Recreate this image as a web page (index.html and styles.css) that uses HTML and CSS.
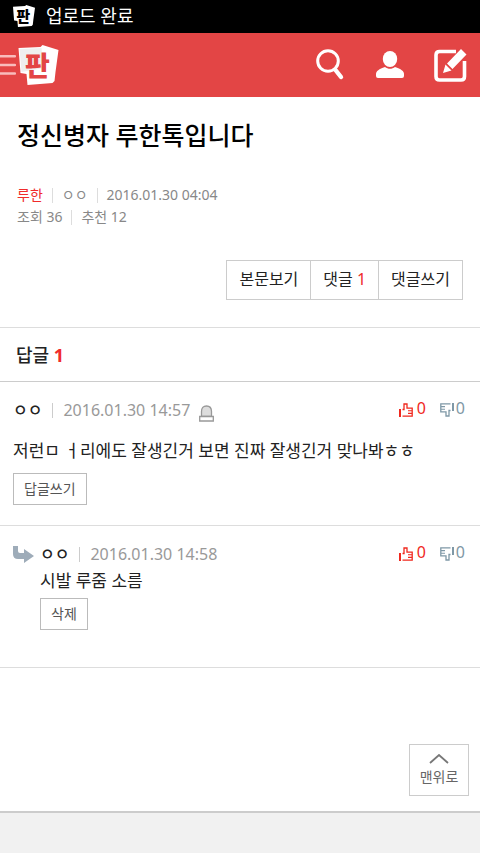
FILE: index.html
```html
<!DOCTYPE html>
<html lang="ko">

<head>
    <meta charset="UTF-8">
    <meta name="viewport" content="width=device-width, initial-scale=1.0">
    <title>정신병자 루한톡입니다</title>
    <link rel="stylesheet" href="styles.css">
</head>

<body>
    <!-- shared icons -->
    <svg class="defs" width="0" height="0" aria-hidden="true">
        <symbol id="thumb-up" viewBox="0 0 14 14">
            <path fill="none" stroke="currentColor" stroke-width="1.3" d="M3.500 6.500H5V1h3v4.200h5.200v8H3.500"/>
            <path fill="none" stroke="currentColor" stroke-width="1.1" d="M9 7.8h4M9 10.4h4"/>
            <path fill="currentColor" d="M0 6h2v8H0z"/>
        </symbol>
        <symbol id="thumb-down" viewBox="0 0 14 14">
            <path fill="none" stroke="currentColor" stroke-width="1.3" d="M10.500 7.500H9V13H6V8.800H.8V.8h9.700"/>
            <path fill="none" stroke="currentColor" stroke-width="1.1" d="M1 3.600h4M1 6.200h4"/>
            <path fill="currentColor" d="M12 0h2v8h-2z"/>
        </symbol>
    </svg>

    <div class="status-bar">
        <svg class="status-logo" viewBox="0 0 40 40" aria-hidden="true">
            <path fill="#fff" d="M0 3l22-1 2-2 16 5-3 22-1 9-2 2-25 2-1-11-6-1z"/>
            <text class="logo-text logo-text-dark" x="19" y="31" text-anchor="middle">판</text>
        </svg>
        <span>업로드 완료</span>
    </div>

    <header class="header">
        <button class="menu-btn" type="button" aria-label="메뉴">
            <svg width="16" height="22" viewBox="0 0 16 22">
                <path stroke="#f9bcbc" stroke-width="2.4" stroke-linecap="round" d="M0 2.2h15M0 11h15M0 19.5h15"/>
            </svg>
        </button>
        <a class="logo" href="#" aria-label="판">
            <svg width="41" height="40" viewBox="0 0 40 40">
                <path fill="#fff" d="M0 3l22-1 2-2 16 5-3 22-1 9-2 2-25 2-1-11-6-1z"/>
                <path fill="#efefef" d="M1 4l22-1 2 20-22 4z"/>
                <text class="logo-text" x="19" y="31" text-anchor="middle">판</text>
            </svg>
        </a>
        <nav class="header-nav">
            <button type="button" aria-label="검색">
                <svg width="30" height="32" viewBox="0 0 30 32">
                    <circle cx="12" cy="12" r="10.3" fill="none" stroke="#fff" stroke-width="3"/>
                    <path stroke="#fff" stroke-width="4.4" stroke-linecap="round" d="M19.5 21l5.500 7"/>
                </svg>
            </button>
            <button type="button" aria-label="내 정보">
                <svg width="28" height="28" viewBox="0 0 28 28">
                    <ellipse cx="14" cy="8" rx="7.2" ry="8" fill="#fff"/>
                    <path fill="#fff" d="M0 25v-2c0-3 3-5 9-7 3 2.400 7 2.400 10 0 6 2 9 4 9 7v2q0 2-2 2H2q-2 0-2-2z"/>
                </svg>
            </button>
            <button type="button" aria-label="글쓰기">
                <svg width="33" height="33" viewBox="0 0 33 33">
                    <path fill="none" stroke="#fff" stroke-width="3.600" d="M22 2.500H5.500q-3.500 0-3.500 3.500v21.500q0 3.500 3.500 3.500h21.500q3.500 0 3.500-3.500V12"/>
                    <path fill="#fff" d="M27 0l5.500 5.500L18.500 20 13 14.500zM11.500 15.500l6 6-8.500 2.500z"/>
                </svg>
            </button>
        </nav>
    </header>

    <main>
        <section class="post">
            <h1>정신병자 루한톡입니다</h1>
            <div class="post-info">
                <a class="channel" href="#">루한</a><i class="bar"></i><span>ㅇㅇ</span><i class="bar"></i><span>2016.01.30 04:04</span>
            </div>
            <div class="post-info">
                <span>조회 36</span><i class="bar"></i><span>추천 12</span>
            </div>
            <div class="post-btns">
                <button type="button">본문보기</button>
                <button type="button">댓글 <em>1</em></button>
                <button type="button">댓글쓰기</button>
            </div>
        </section>

        <h2 class="reply-title">답글 <em>1</em></h2>

        <article class="comment">
            <div class="comment-head">
                <b class="name">ㅇㅇ</b><i class="bar"></i><span class="date">2016.01.30 14:57</span>
                <button class="report" type="button" aria-label="신고">
                    <svg width="15" height="17" viewBox="0 0 15 17">
                        <path fill="#ddd" stroke="#999" stroke-width="1.3" d="M2.500 11.500V6.500q0-5.500 5-5.500t5 5.500v5z"/>
                        <path fill="#fff" stroke="#999" stroke-width="1.300" d="M.7 11.500h13.600v4.500H.7z"/>
                    </svg>
                </button>
                <div class="votes">
                    <button class="up" type="button" aria-label="추천"><svg width="14" height="14"><use href="#thumb-up"/></svg>0</button>
                    <button class="down" type="button" aria-label="반대"><svg width="14" height="14"><use href="#thumb-down"/></svg>0</button>
                </div>
            </div>
            <p class="comment-text">저런ㅁ ㅓ리에도 잘생긴거 보면 진짜 잘생긴거 맞나봐ㅎㅎ</p>
            <button class="small-btn" type="button">답글쓰기</button>
        </article>

        <article class="comment reply">
            <div class="comment-head">
                <svg class="arrow" width="21" height="17" viewBox="0 0 21 17" aria-hidden="true">
                    <path fill="#9eacb9" d="M0 0h5v5q0 2 2 2h4V3l10 7-10 7v-4H5q-5 0-5-5z"/>
                </svg>
                <b class="name">ㅇㅇ</b><i class="bar"></i><span class="date">2016.01.30 14:58</span>
                <div class="votes">
                    <button class="up" type="button" aria-label="추천"><svg width="14" height="14"><use href="#thumb-up"/></svg>0</button>
                    <button class="down" type="button" aria-label="반대"><svg width="14" height="14"><use href="#thumb-down"/></svg>0</button>
                </div>
            </div>
            <p class="comment-text">시발 루줌 소름</p>
            <button class="small-btn" type="button">삭제</button>
        </article>

        <div class="top-wrap">
            <a class="top-btn" href="#">
                <svg width="20" height="10" viewBox="0 0 20 10"><path fill="none" stroke="#777" stroke-width="1.800" d="M1 9l9-8 9 8"/></svg>
                맨위로
            </a>
        </div>
    </main>

    <footer class="footer"></footer>
</body>

</html>
```

FILE: styles.css
```css
* {
    box-sizing: border-box;
}

body {
    display: flex;
    flex-direction: column;
    min-height: 100vh;
    margin: 0;
    font-family: "Noto Sans", "Noto Sans CJK KR", sans-serif;
    font-size: 16px;
    color: #222;
    background-color: #fff;
}

h1, h2, p {
    margin: 0;
}

a {
    color: inherit;
    text-decoration: none;
}

em, i {
    font-style: normal;
}

svg {
    display: block;
}

button {
    padding: 0;
    border: none;
    background: none;
    font-family: inherit;
    color: inherit;
    cursor: pointer;
}

.defs {
    position: absolute;
}

.status-bar {
    display: flex;
    align-items: center;
    gap: 11px;
    height: 33px;
    padding: 0 13px 2px;
    font-size: 18px;
    line-height: 24px;
    color: #fff;
    background-color: #000;
}

.status-logo {
    width: 22px;
    height: 22px;
}

.logo-text {
    font-family: "Noto Sans CJK KR", sans-serif;
    font-size: 27px;
    font-weight: 900;
    fill: #e34545;
}

.logo-text-dark {
    fill: #000;
}

.header {
    display: flex;
    align-items: center;
    height: 64px;
    padding-right: 13px;
    background-color: #e34545;
}

.menu-btn {
    margin-right: 2px;
}

.header-nav {
    display: flex;
    align-items: center;
    gap: 30px;
    margin-left: auto;
}

.post {
    padding: 19px 17px 27px;
    border-bottom: 1px solid #ddd;
}

.post h1 {
    margin-bottom: 30px;
    font-size: 25px;
    font-weight: 500;
    line-height: 38px;
    color: #000;
}

.post-info {
    display: flex;
    align-items: center;
    font-size: 14px;
    line-height: 22px;
    color: #888;
}

.bar {
    width: 1px;
    height: 15px;
    margin: 0 9px;
    background-color: #ddd;
}

.channel {
    color: #f02b2b;
}

.post-btns {
    display: flex;
    justify-content: flex-end;
    margin-top: 32px;
}

.post-btns button {
    height: 40px;
    padding: 0 12px 4px;
    border: 1px solid #ccc;
    font-size: 16px;
}

.post-btns button + button {
    border-left: none;
}

.post-btns em,
.reply-title em {
    color: #f02b2b;
}

.reply-title {
    padding: 14px 16px 12px;
    border-bottom: 1px solid #ccc;
    font-size: 18px;
    font-weight: 500;
    line-height: 27px;
}

.reply-title em {
    font-weight: 700;
}

.comment {
    padding: 16px 13px 20px;
    border-bottom: 1px solid #ddd;
}

.comment-head {
    display: flex;
    align-items: center;
    line-height: 24px;
}

.comment-head .bar {
    margin: 0 10px;
    background-color: #ccc;
}

.name {
    font-size: 16px;
    font-weight: 500;
}

.date {
    color: #999;
}

.report {
    margin: 6px 0 0 9px;
}

.votes {
    display: flex;
    align-self: flex-start;
    gap: 14px;
    margin: 0 2px 0 auto;
}

.votes button {
    display: flex;
    align-items: center;
    gap: 4px;
    font-size: 16px;
    line-height: 20px;
}

.votes svg {
    margin-top: 4px;
}

.votes .up {
    color: #f0281e;
}

.votes .down {
    gap: 2px;
    color: #7f98a6;
}

.comment-text {
    margin: 16px 0 9px;
    font-size: 17px;
    line-height: 26px;
}

.small-btn {
    height: 32px;
    padding: 0 10px 3px;
    border: 1px solid #bbb;
    font-size: 14px;
    color: #555;
}

.reply {
    padding-bottom: 37px;
}

.reply .name {
    margin-left: 6px;
}

.reply .comment-text {
    margin: 2px 0 4px;
}

.reply .comment-text,
.reply .small-btn {
    margin-left: 27px;
}

.top-wrap {
    display: flex;
    justify-content: flex-end;
    padding: 76px 11px 15px;
}

.top-btn {
    display: flex;
    flex-direction: column;
    align-items: center;
    width: 60px;
    padding: 9px 0 6px;
    border: 1px solid #ccc;
    font-size: 14px;
    line-height: 25px;
    color: #666;
}

.footer {
    flex: 1;
    min-height: 40px;
    border-top: 2px solid #ccc;
    background-color: #f1f1f1;
}
```
